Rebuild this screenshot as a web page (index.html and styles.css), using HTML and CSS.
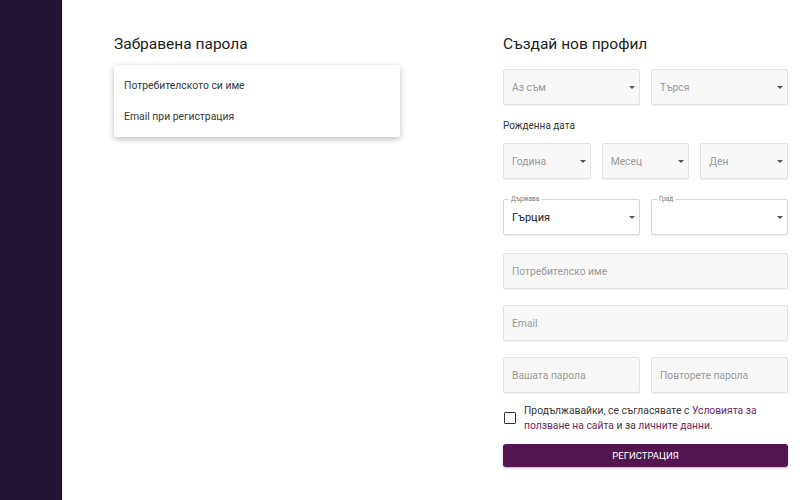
FILE: index.html
```html
<!DOCTYPE html>
<html lang="bg">
<head>
  <meta charset="UTF-8">
  <title>Регистрация</title>
  <link rel="stylesheet" href="styles.css">
</head>
<body>
  <aside class="sidebar"></aside>

  <main class="content">
    <!-- Забравена парола -->
    <section class="forgot">
      <h2 class="title">Забравена парола</h2>
      <ul class="menu">
        <li>Потребителското си име</li>
        <li>Email при регистрация</li>
      </ul>
    </section>

    <!-- Регистрация -->
    <section class="register">
      <h2 class="title">Създай нов профил</h2>

      <div class="row two">
        <div class="field select"><span class="ph">Аз съм</span><i class="arrow"></i></div>
        <div class="field select"><span class="ph">Търся</span><i class="arrow"></i></div>
      </div>

      <div class="label">Рожденна дата</div>
      <div class="row three date">
        <div class="field select"><span class="ph">Година</span><i class="arrow"></i></div>
        <div class="field select"><span class="ph">Месец</span><i class="arrow"></i></div>
        <div class="field select"><span class="ph">Ден</span><i class="arrow"></i></div>
      </div>

      <div class="row two place">
        <div class="field select outlined">
          <span class="legend">Държава</span>
          <span class="value">Гърция</span><i class="arrow"></i>
        </div>
        <div class="field select outlined">
          <span class="legend">Град</span>
          <span class="value"></span><i class="arrow"></i>
        </div>
      </div>

      <div class="row">
        <div class="field"><span class="ph">Потребителско име</span></div>
      </div>
      <div class="row">
        <div class="field"><span class="ph">Email</span></div>
      </div>
      <div class="row two pass">
        <div class="field"><span class="ph">Вашата парола</span></div>
        <div class="field"><span class="ph">Повторете парола</span></div>
      </div>

      <label class="terms">
        <span class="box"></span>
        <span class="terms-text">Продължавайки, се съгласявате с <a href="#">Условията за ползване на сайта</a> и за <a href="#">личните данни</a>.</span>
      </label>

      <button class="submit">Регистрация</button>
    </section>
  </main>
</body>
</html>
```

FILE: styles.css
```css
/* основни стилове */
body {
  margin: 0;
  display: flex;
  min-height: 500px;
  font-family: Roboto, "Liberation Sans", sans-serif;
  color: #333;
  background: #fff;
}

.sidebar {
  width: 61px;
  flex-shrink: 0;
  background: #221535;
  border-right: 1px solid #150c24;
}

.content {
  flex: 1;
  display: flex;
  padding: 34px 13px 0 52px;
}

.title {
  margin: 0 0 15px;
  font-size: 15.5px;
  font-weight: 400;
  line-height: 20px;
  color: #222;
}

/* лява колона */
.forgot {
  width: 286px;
  margin-right: 103px;
}
.menu {
  list-style: none;
  margin: -4px 0 0;
  padding: 5px 0;
  background: #fff;
  box-shadow: 0 2px 6px rgba(0, 0, 0, 0.25);
  border-radius: 2px;
}
.menu li {
  padding: 0 10px;
  height: 31px;
  line-height: 31px;
  font-size: 10.4px;
  color: #383838;
}

/* дясна колона */
.register {
  width: 285px;
}
.row {
  display: flex;
  gap: 11px;
  margin-bottom: 16px;
}
.row.date {
  margin-bottom: 20px;
}
.row.place {
  margin-bottom: 18px;
}
.row.pass {
  margin-bottom: 10px;
}
.row .field {
  flex: 1;
}
.label {
  margin: -2px 0 10px;
  font-size: 10px;
  line-height: 14px;
  color: #333;
}

.field {
  position: relative;
  height: 34px;
  display: flex;
  align-items: center;
  padding: 0 8px;
  background: #f8f8f8;
  border: 1px solid #e3e3e3;
  border-radius: 2px;
  box-shadow: 0 1px 1px rgba(0, 0, 0, 0.06);
}
.ph {
  font-size: 10.3px;
  color: #999;
}
.value {
  font-size: 11px;
  color: #222;
}
.arrow {
  position: absolute;
  right: 4px;
  top: 16px;
  border-left: 3px solid transparent;
  border-right: 3px solid transparent;
  border-top: 3.5px solid #555;
}

/* поле с надпис върху рамката */
.outlined {
  background: #fff;
  border-color: #d8d8d8;
}
.legend {
  position: absolute;
  left: 5px;
  top: -5px;
  padding: 0 2px;
  font-size: 6.5px;
  line-height: 8px;
  color: #777;
  background: #fff;
}

.terms {
  display: flex;
  align-items: center;
  margin: 0 0 11px;
  cursor: pointer;
}
.box {
  width: 10px;
  height: 10px;
  flex-shrink: 0;
  margin: 0 8px 0 1px;
  border: 1.5px solid #333;
  border-radius: 1px;
}
.terms-text {
  font-size: 10.3px;
  line-height: 15px;
  color: #383838;
}
.terms a {
  color: #6b2861;
  text-decoration: none;
}

.submit {
  display: block;
  width: 100%;
  height: 23px;
  padding: 0;
  border: none;
  border-radius: 3px;
  background: #541650;
  color: #fff;
  font-family: inherit;
  font-size: 9.5px;
  text-transform: uppercase;
  box-shadow: 0 1px 2px rgba(0, 0, 0, 0.3);
  cursor: pointer;
}
```
